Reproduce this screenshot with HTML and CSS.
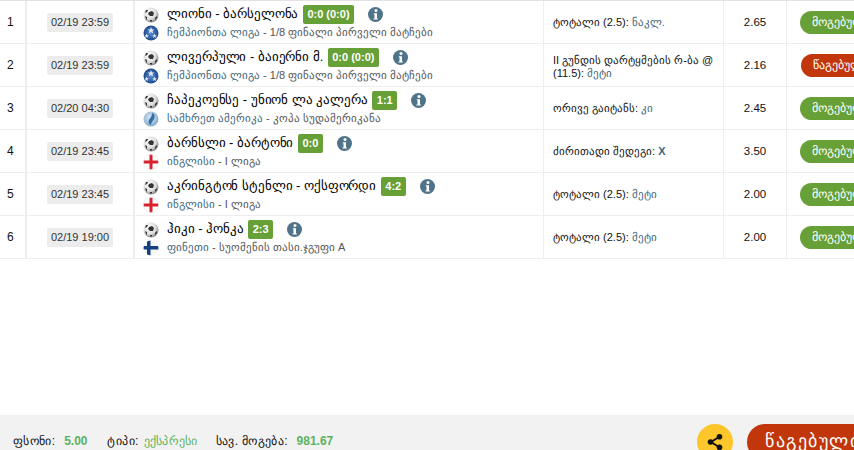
FILE: index.html
```html
<!DOCTYPE html>
<html lang="ka">
<head>
<meta charset="utf-8">
<title>ბილეთი</title>
<link rel="stylesheet" href="styles.css">
</head>
<body>
<svg class="defs" width="0" height="0" aria-hidden="true">
  <defs>
    <radialGradient id="ballg" cx="40%" cy="35%" r="70%"><stop offset="0" stop-color="#fff"/><stop offset=".6" stop-color="#ddd"/><stop offset="1" stop-color="#777"/></radialGradient>
    <radialGradient id="clg" cx="50%" cy="50%" r="60%"><stop offset="0" stop-color="#5a8fd8"/><stop offset="1" stop-color="#123a7a"/></radialGradient>
    <radialGradient id="sag" cx="45%" cy="40%" r="65%"><stop offset="0" stop-color="#dbe8f2"/><stop offset="1" stop-color="#7ea7c8"/></radialGradient>
    <clipPath id="circ"><circle cx="8" cy="8" r="7.5"/></clipPath>
    <symbol id="ball" viewBox="0 0 16 16"><circle cx="8" cy="8" r="7.5" fill="url(#ballg)"/><path d="M6 5l3-1 2 2-1 3-3 0-2-2zM2 9l2 1 0 3-1-1zM12 11l2-2 0 2-2 2zM7 13l2 0 0 1.5-2 0zM3 3l2 0-1 2-2 1z" fill="#333"/></symbol>
    <symbol id="cl" viewBox="0 0 16 16"><circle cx="8" cy="8" r="7.5" fill="url(#clg)"/><path d="M8 2l1 2.500 2.500 0-2 1.600.8 2.500-2.300-1.500-2.300 1.500.8-2.500-2-1.600 2.500 0zM3.500 8.500l.7 1.700 1.800 0-1.400 1.100.5 1.700-1.600-1-1.300.9.400-1.600-1-1.100 1.300 0zM11.500 8.500l.7 1.700 1.800 0-1.400 1.100.5 1.700-1.600-1-1.500 1 .5-1.700-1.400-1.100 1.800 0z" fill="#dfe9f5"/></symbol>
    <symbol id="sa" viewBox="0 0 16 16"><circle cx="8" cy="8" r="7.500" fill="url(#sag)"/><path d="M9 2c3 1 3 4 2 6s-3 3-3 6c-2-1-3-3-2-5s3-3 3-7z" fill="#2f6ea8"/></symbol>
    <symbol id="en" viewBox="0 0 16 16"><g clip-path="url(#circ)"><rect width="16" height="16" fill="#fff"/><rect x="6.500" width="3" height="16" fill="#d8212f"/><rect y="6.500" width="16" height="3" fill="#d8212f"/></g><circle cx="8" cy="8" r="7.500" fill="none" stroke="#ddd" stroke-width=".5"/></symbol>
    <symbol id="fi" viewBox="0 0 16 16"><g clip-path="url(#circ)"><rect width="16" height="16" fill="#f4f6f8"/><rect x="4" width="3.500" height="16" fill="#143f80"/><rect y="6" width="16" height="3.500" fill="#143f80"/></g></symbol>
    <symbol id="info" viewBox="0 0 15 15"><circle cx="7.500" cy="7.500" r="7.500" fill="#4f7389"/><circle cx="8" cy="3.500" r="1.500" fill="#fff"/><path d="M5.800 6.200h3.200v5.300h.9v1H5.500v-1h1V7.200h-.7z" fill="#fff"/></symbol>
  </defs>
</svg>
<main class="page">
  <div class="rows">
    <div class="row">
      <div class="num">1</div>
      <div class="dt"><span class="date">02/19 23:59</span></div>
      <div class="match">
        <div class="line"><svg class="ic"><use href="#ball"/></svg><span class="teams">ლიონი - ბარსელონა</span><span class="score">0:0 (0:0)</span><svg class="info"><use href="#info"/></svg></div>
        <div class="line sub"><svg class="ic"><use href="#cl"/></svg><span class="league"><a>ჩემპიონთა ლიგა</a> - 1/8 ფინალი პირველი მატჩები</span></div>
      </div>
      <div class="bet"><span>ტოტალი (2.5): <a>ნაკლ.</a></span></div>
      <div class="odd">2.65</div>
      <div class="st"><span class="pill win">მოგებული</span></div>
    </div>
    <div class="row">
      <div class="num">2</div>
      <div class="dt"><span class="date">02/19 23:59</span></div>
      <div class="match">
        <div class="line"><svg class="ic"><use href="#ball"/></svg><span class="teams">ლივერპული - ბაიერნი მ.</span><span class="score">0:0 (0:0)</span><svg class="info"><use href="#info"/></svg></div>
        <div class="line sub"><svg class="ic"><use href="#cl"/></svg><span class="league"><a>ჩემპიონთა ლიგა</a> - 1/8 ფინალი პირველი მატჩები</span></div>
      </div>
      <div class="bet two"><span>II გუნდის დარტყმების რ-ბა @ (11.5): <a>მეტი</a></span></div>
      <div class="odd">2.16</div>
      <div class="st"><span class="pill lose">წაგებული</span></div>
    </div>
    <div class="row">
      <div class="num">3</div>
      <div class="dt"><span class="date">02/20 04:30</span></div>
      <div class="match">
        <div class="line"><svg class="ic"><use href="#ball"/></svg><span class="teams">ჩაპეკოენსე - უნიონ ლა კალერა</span><span class="score">1:1</span><svg class="info"><use href="#info"/></svg></div>
        <div class="line sub"><svg class="ic"><use href="#sa"/></svg><span class="league"><a>სამხრეთ ამერიკა</a> - კოპა სუდამერიკანა</span></div>
      </div>
      <div class="bet"><span>ორივე გაიტანს: <a>კი</a></span></div>
      <div class="odd">2.45</div>
      <div class="st"><span class="pill win">მოგებული</span></div>
    </div>
    <div class="row">
      <div class="num">4</div>
      <div class="dt"><span class="date">02/19 23:45</span></div>
      <div class="match">
        <div class="line"><svg class="ic"><use href="#ball"/></svg><span class="teams">ბარნსლი - ბარტონი</span><span class="score">0:0</span><svg class="info"><use href="#info"/></svg></div>
        <div class="line sub"><svg class="ic"><use href="#en"/></svg><span class="league"><a>ინგლისი</a> - I ლიგა</span></div>
      </div>
      <div class="bet"><span>ძირითადი შედეგი: <a class="strong">X</a></span></div>
      <div class="odd">3.50</div>
      <div class="st"><span class="pill win">მოგებული</span></div>
    </div>
    <div class="row">
      <div class="num">5</div>
      <div class="dt"><span class="date">02/19 23:45</span></div>
      <div class="match">
        <div class="line"><svg class="ic"><use href="#ball"/></svg><span class="teams">აკრინგტონ სტენლი - ოქსფორდი</span><span class="score">4:2</span><svg class="info"><use href="#info"/></svg></div>
        <div class="line sub"><svg class="ic"><use href="#en"/></svg><span class="league"><a>ინგლისი</a> - I ლიგა</span></div>
      </div>
      <div class="bet"><span>ტოტალი (2.5): <a>მეტი</a></span></div>
      <div class="odd">2.00</div>
      <div class="st"><span class="pill win">მოგებული</span></div>
    </div>
    <div class="row">
      <div class="num">6</div>
      <div class="dt"><span class="date">02/19 19:00</span></div>
      <div class="match">
        <div class="line"><svg class="ic"><use href="#ball"/></svg><span class="teams">ჰიკი - ჰონკა</span><span class="score">2:3</span><svg class="info"><use href="#info"/></svg></div>
        <div class="line sub"><svg class="ic"><use href="#fi"/></svg><span class="league"><a>ფინეთი</a> - სუომენის თასი.ჯგუფი A</span></div>
      </div>
      <div class="bet"><span>ტოტალი (2.5): <a>მეტი</a></span></div>
      <div class="odd">2.00</div>
      <div class="st"><span class="pill win">მოგებული</span></div>
    </div>
  </div>
  <footer class="foot">
    <div class="stats">
      <span class="stat">ფსონი: <b>5.00</b></span>
      <span class="stat">ტიპი: <b>ექსპრესი</b></span>
      <span class="stat">სავ. მოგება: <b>981.67</b></span>
    </div>
    <div class="acts">
      <span class="share"><svg width="18" height="18" viewBox="0 0 18 18"><path d="M13 4L5 9l8 5" fill="none" stroke="#111" stroke-width="2"/><circle cx="13.500" cy="3.800" r="2.800" fill="#111"/><circle cx="4.500" cy="9" r="2.800" fill="#111"/><circle cx="13.500" cy="14.200" r="2.800" fill="#111"/></svg></span>
      <span class="big">წაგებული</span>
    </div>
  </footer>
</main>
</body>
</html>
```
FILE: styles.css
```css
* { box-sizing: border-box; }
html, body { margin: 0; height: 100%; }
body { width: 854px; height: 450px; overflow: hidden; background: #fff; font-family: "Liberation Sans", sans-serif; color: #111; }
.defs { position: absolute; }
.page { display: flex; flex-direction: column; height: 450px; overflow: hidden; }
.rows { flex: 1; border-top: 1px solid #e2e2e2; }
.row { display: grid; grid-template-columns: 27px 108px 409px 180px 63px 110px; width: 897px; height: 43px; border-bottom: 1px solid #eee; font-size: 11px; }
.row > div { border-right: 1px solid #eee; display: flex; align-items: center; }
.row > div:last-child { border-right: 0; }
.row > div:first-child, .row > div:nth-child(2) { border-right-width: 2px; }
.num { padding-left: 7px; font-size: 12px; }
.dt { justify-content: center; }
.date { background: #ececec; border-radius: 2px; padding: 0 4px; height: 19px; line-height: 19px; color: #333; font-size: 11px; }
.match { flex-direction: column; align-items: flex-start !important; justify-content: flex-start; padding: 4px 0 0 8px; }
.line { display: flex; align-items: center; height: 19px; }
.line.sub { height: 17px; }
.ic { width: 16px; height: 16px; margin-right: 8px; flex: none; }
.teams { font-size: 13px; color: #000; letter-spacing: -0.07px; margin-bottom: 2px; }
.league { font-size: 11px; color: #555; }
a { color: #416679; }
a.strong { font-weight: bold; }
.score { background: #67a037; color: #fff; font-weight: bold; font-size: 11px; height: 19px; line-height: 19px; padding: 0 4.5px; border-radius: 2px; margin-left: 4.500px; }
.info { width: 15px; height: 15px; margin-left: 14px; }
.bet { padding-left: 9px; padding-right: 6px; line-height: 14px; font-size: 11px; }
.bet.two { padding-top: 4px; line-height: 13px; }
.odd { justify-content: center; font-size: 11.500px; color: #111; }
.st { padding-left: 13px; }
.pill { color: #fff; font-size: 11.5px; height: 23px; line-height: 22px; border-radius: 12px; padding: 0 12px; width: 84px; white-space: nowrap; }
.win { background: #67a037; }
.lose { background: #c1370b; margin-left: 1px; }
.foot { height: 35px; background: #f2f2f2; display: flex; justify-content: space-between; width: 920px; flex: none; }
.stats { display: flex; gap: 18px; padding: 19px 0 0 13px; font-size: 12px; letter-spacing: 0.35px; color: #111; }
.stat:first-child { margin-right: 2px; }
.stat b { font-weight: bold; font-size: 12px; letter-spacing: 0; color: #5cb35e; margin-left: 5px; }
.stat:nth-child(2) b { font-weight: normal; letter-spacing: 0.25px; margin-left: 1.400px; }
.acts { display: flex; gap: 14px; padding-top: 9px; }
.share { width: 36px; height: 36px; border-radius: 50%; background: #fdc62b; display: flex; align-items: center; justify-content: center; margin-left: 1px; }
.big { background: #c1370b; color: #fff; width: 173px; height: 36px; border-radius: 18px; padding: 6px 0 0 18px; font-size: 18px; letter-spacing: 1.500px; white-space: nowrap; }
```
